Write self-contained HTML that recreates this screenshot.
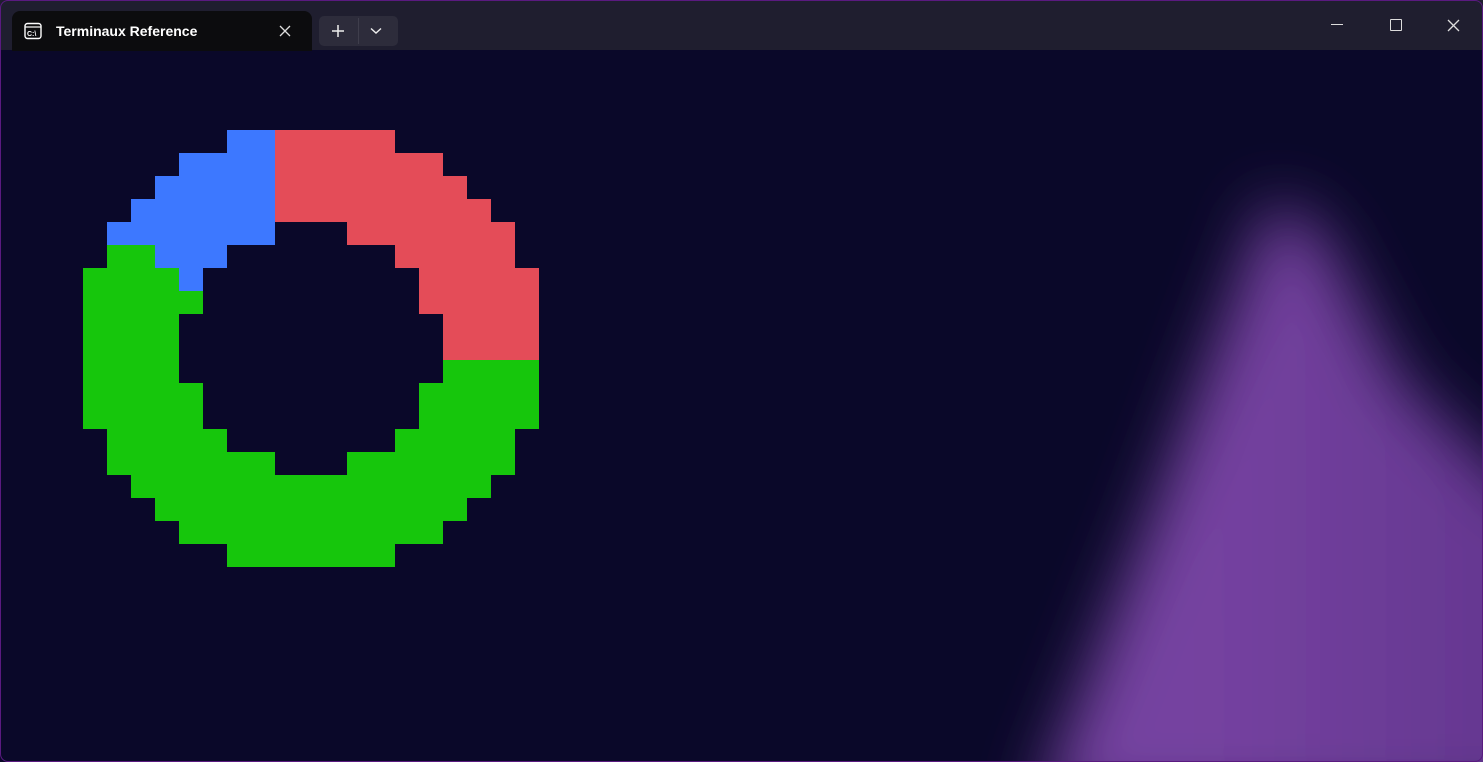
<!DOCTYPE html>
<html><head><meta charset="utf-8"><style>
html,body{margin:0;padding:0;width:1483px;height:762px;overflow:hidden;background:#0a0829;}
#win{position:absolute;left:0;top:0;width:1483px;height:762px;overflow:hidden;background:#0a0829;}
#frame{position:absolute;left:0;top:0;width:1481px;height:760px;border:1px solid #5a1a80;border-radius:8px;pointer-events:none;}
#bar{position:absolute;left:0;top:0;width:100%;height:50px;background:#1f1e2f;}
#tab{position:absolute;left:12px;top:11px;width:300px;height:40px;background:#0c0c0e;border-radius:8px 8px 0 0;}
#tab .t{position:absolute;left:44px;top:12px;font:bold 14px "Liberation Sans",sans-serif;color:#fff;}
.btns{position:absolute;left:319px;top:16px;width:79px;height:30px;background:#2d2c3b;border-radius:5px;}
.c{position:absolute;}
#term{position:absolute;left:0;top:50px;width:1483px;height:712px;background:#0a0829;overflow:hidden;}
.b{background:#3d78ff}.r{background:#e44c58}.g{background:#16c60c}
</style></head><body><div id="win">
<div id="term">
<svg width="1483" height="712" style="position:absolute;left:0;top:0">
<defs><filter id="f" x="-50%" y="-50%" width="200%" height="200%"><feGaussianBlur stdDeviation="32"/></filter>
<linearGradient id="lg" x1="0" y1="0" x2="1" y2="0"><stop offset="0" stop-color="#7642a0"/><stop offset="0.3" stop-color="#7542a0"/><stop offset="1" stop-color="#5e338a"/></linearGradient></defs>
<polygon points="1270,150 1320,180 1400,330 1520,440 1620,500 1620,760 1035,760 1150,470 1240,230" fill="url(#lg)" filter="url(#f)"/>
</svg>
</div>
<div id="bar"></div>
<div id="tab">
<svg style="position:absolute;left:12px;top:11px" width="18" height="18" viewBox="0 0 18 18"><rect x="1" y="1.5" width="16" height="15" rx="2.5" fill="none" stroke="#fff" stroke-width="1.4"/><line x1="1" y1="5" x2="17" y2="5" stroke="#fff" stroke-width="1.2"/><text x="3" y="14" font-family="Liberation Sans" font-size="7" font-weight="bold" fill="#fff">C:\</text></svg>
<div class="t">Terminaux Reference</div>
<svg style="position:absolute;left:267px;top:14px" width="12" height="12"><path d="M1 1L11 11M11 1L1 11" stroke="#ddd" stroke-width="1.3"/></svg>
</div>
<div class="btns">
<svg style="position:absolute;left:12px;top:8px" width="14" height="14"><path d="M7 1V13M1 7H13" stroke="#eee" stroke-width="1.5"/></svg>
<div style="position:absolute;left:39px;top:2px;width:1px;height:26px;background:#3f3e4c"></div>
<svg style="position:absolute;left:51px;top:11px" width="12" height="8"><path d="M1 1.5L6 6L11 1.5" fill="none" stroke="#eee" stroke-width="1.4"/></svg>
</div>
<div style="position:absolute;left:1331px;top:24px;width:12px;height:1px;background:#ddd"></div>
<div style="position:absolute;left:1390px;top:19px;width:10px;height:10px;border:1.3px solid #ddd;border-radius:1px"></div>
<svg style="position:absolute;left:1447px;top:19px" width="13" height="13"><path d="M1 1L12 12M12 1L1 12" stroke="#ddd" stroke-width="1.3"/></svg>

<div class="c b" style="left:227px;top:130px;width:48px;height:23px"></div>
<div class="c r" style="left:275px;top:130px;width:120px;height:23px"></div>
<div class="c b" style="left:179px;top:153px;width:96px;height:23px"></div>
<div class="c r" style="left:275px;top:153px;width:168px;height:23px"></div>
<div class="c b" style="left:155px;top:176px;width:120px;height:23px"></div>
<div class="c r" style="left:275px;top:176px;width:192px;height:23px"></div>
<div class="c b" style="left:131px;top:199px;width:144px;height:23px"></div>
<div class="c r" style="left:275px;top:199px;width:216px;height:23px"></div>
<div class="c b" style="left:107px;top:222px;width:168px;height:23px"></div>
<div class="c r" style="left:347px;top:222px;width:168px;height:23px"></div>
<div class="c g" style="left:107px;top:245px;width:48px;height:23px"></div>
<div class="c b" style="left:155px;top:245px;width:72px;height:23px"></div>
<div class="c r" style="left:395px;top:245px;width:120px;height:23px"></div>
<div class="c g" style="left:83px;top:268px;width:96px;height:23px"></div>
<div class="c b" style="left:179px;top:268px;width:24px;height:23px"></div>
<div class="c r" style="left:419px;top:268px;width:120px;height:23px"></div>
<div class="c g" style="left:83px;top:291px;width:120px;height:23px"></div>
<div class="c r" style="left:419px;top:291px;width:120px;height:23px"></div>
<div class="c g" style="left:83px;top:314px;width:96px;height:69px"></div>
<div class="c r" style="left:443px;top:314px;width:96px;height:46px"></div>
<div class="c g" style="left:443px;top:360px;width:96px;height:23px"></div>
<div class="c g" style="left:83px;top:383px;width:120px;height:46px"></div>
<div class="c g" style="left:419px;top:383px;width:120px;height:46px"></div>
<div class="c g" style="left:107px;top:429px;width:120px;height:23px"></div>
<div class="c g" style="left:395px;top:429px;width:120px;height:23px"></div>
<div class="c g" style="left:107px;top:452px;width:168px;height:23px"></div>
<div class="c g" style="left:347px;top:452px;width:168px;height:23px"></div>
<div class="c g" style="left:131px;top:475px;width:360px;height:23px"></div>
<div class="c g" style="left:155px;top:498px;width:312px;height:23px"></div>
<div class="c g" style="left:179px;top:521px;width:264px;height:23px"></div>
<div class="c g" style="left:227px;top:544px;width:168px;height:23px"></div>
<div id="frame"></div>
</div></body></html>
